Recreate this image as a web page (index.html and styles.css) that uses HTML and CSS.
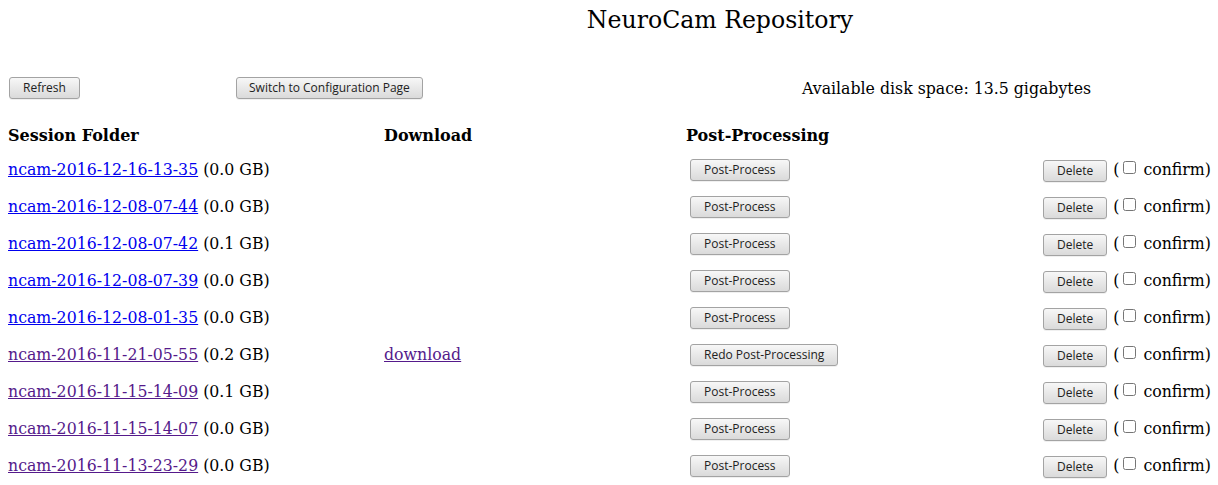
FILE: index.html
```html
<!DOCTYPE html>
<html>
<head>
<meta charset="utf-8">
<title>NeuroCam Repository</title>
<link rel="stylesheet" href="styles.css">
</head>
<body>
<h1 class="title">NeuroCam Repository</h1>
<div class="toolbar">
  <div class="tb-left"><button class="btn">Refresh</button></div>
  <div class="tb-mid"><button class="btn switch">Switch to Configuration Page</button></div>
  <div class="tb-right">Available disk space: 13.5 gigabytes</div>
</div>
<table class="sessions">
  <thead>
    <tr><th class="c1">Session Folder</th><th class="c2">Download</th><th class="c3">Post-Processing</th><th class="c4"></th></tr>
  </thead>
  <tbody>
    <tr><td><a href="#a1" class="new">ncam-2016-12-16-13-35</a> (0.0 GB)</td><td></td><td><button class="btn pp">Post-Process</button></td><td><button class="btn del">Delete</button> (<input type="checkbox" class="cb">confirm)</td></tr>
    <tr><td><a href="#a2" class="new">ncam-2016-12-08-07-44</a> (0.0 GB)</td><td></td><td><button class="btn pp">Post-Process</button></td><td><button class="btn del">Delete</button> (<input type="checkbox" class="cb">confirm)</td></tr>
    <tr><td><a href="#a3" class="new">ncam-2016-12-08-07-42</a> (0.1 GB)</td><td></td><td><button class="btn pp">Post-Process</button></td><td><button class="btn del">Delete</button> (<input type="checkbox" class="cb">confirm)</td></tr>
    <tr><td><a href="#a4" class="new">ncam-2016-12-08-07-39</a> (0.0 GB)</td><td></td><td><button class="btn pp">Post-Process</button></td><td><button class="btn del">Delete</button> (<input type="checkbox" class="cb">confirm)</td></tr>
    <tr><td><a href="#a5" class="new">ncam-2016-12-08-01-35</a> (0.0 GB)</td><td></td><td><button class="btn pp">Post-Process</button></td><td><button class="btn del">Delete</button> (<input type="checkbox" class="cb">confirm)</td></tr>
    <tr><td><a href="#b1" class="seen">ncam-2016-11-21-05-55</a> (0.2 GB)</td><td><a href="#b1d" class="seen">download</a></td><td><button class="btn pp">Redo Post-Processing</button></td><td><button class="btn del">Delete</button> (<input type="checkbox" class="cb">confirm)</td></tr>
    <tr><td><a href="#b2" class="seen">ncam-2016-11-15-14-09</a> (0.1 GB)</td><td></td><td><button class="btn pp">Post-Process</button></td><td><button class="btn del">Delete</button> (<input type="checkbox" class="cb">confirm)</td></tr>
    <tr><td><a href="#b3" class="seen">ncam-2016-11-15-14-07</a> (0.0 GB)</td><td></td><td><button class="btn pp">Post-Process</button></td><td><button class="btn del">Delete</button> (<input type="checkbox" class="cb">confirm)</td></tr>
    <tr><td><a href="#b4" class="seen">ncam-2016-11-13-23-29</a> (0.0 GB)</td><td></td><td><button class="btn pp">Post-Process</button></td><td><button class="btn del">Delete</button> (<input type="checkbox" class="cb">confirm)</td></tr>
  </tbody>
</table>
</body>
</html>
```
FILE: styles.css
```css
html, body {
  margin: 0;
  padding: 0;
  background: #ffffff;
}
body {
  padding: 0 8px;
  font-family: "DejaVu Serif", serif;
  font-size: 15.75px;
  color: #000000;
  overflow: hidden;
}
.title {
  margin: 4px 0 0 0;
  padding-left: 222px;
  text-align: center;
  font-size: 23.6px;
  font-weight: normal;
  line-height: 32px;
}
.toolbar {
  display: flex;
  align-items: center;
  margin-top: 40px;
  height: 24px;
}
.tb-left { width: 228px; }
.tb-mid { width: 566px; }
.tb-right { padding-left: 0; }
.btn {
  font-family: "Open Sans", sans-serif;
  font-size: 12px;
  color: #222222;
  height: 22px;
  padding: 0 13px;
  margin: 0 0 0 1px;
  border: 1px solid #a3a3a3;
  border-radius: 3px;
  background: linear-gradient(#f7f7f7, #dadada);
  box-shadow: 0 1px 0 rgba(0,0,0,0.06);
  line-height: 18px;
  vertical-align: middle;
}
.switch { padding: 0 12px; margin-left: 0; }
.sessions {
  border-collapse: collapse;
  margin-top: 26px;
  width: 1210px;
}
.sessions th {
  text-align: left;
  font-weight: bold;
  font-size: 16px;
  padding: 0;
  height: 25px;
  vertical-align: top;
}
.sessions td {
  padding: 0;
  height: 37px;
  white-space: nowrap;
  vertical-align: middle;
}
.c1 { width: 376px; }
.c2 { width: 302px; }
.c3 { width: 356px; }
.pp { margin-left: 4px; }
.del { margin-top: 2px; margin-right: 1px; }
a.new { color: #0000ee; }
a.seen { color: #551a8b; }
.cb {
  width: 13px;
  height: 13px;
  margin: 0 7px 0 4px;
  vertical-align: 0;
}
```
